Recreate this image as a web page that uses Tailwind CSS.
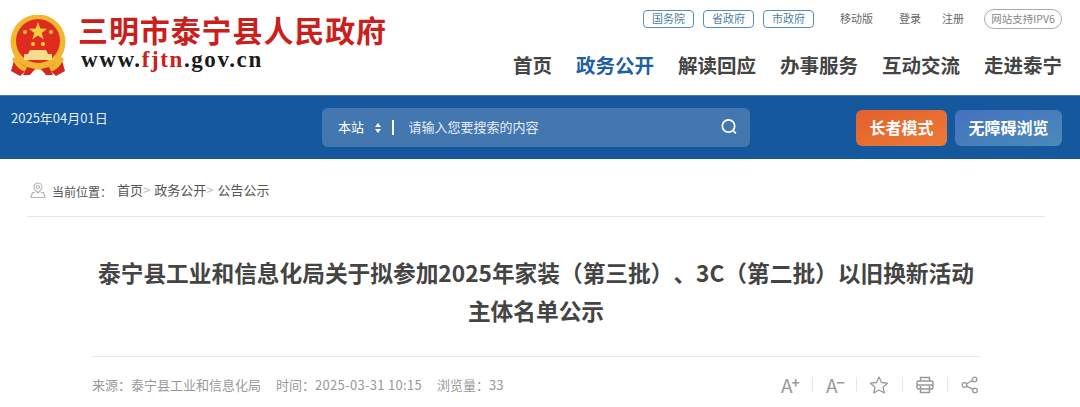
<!DOCTYPE html>
<html lang="zh-CN">
<head>
<meta charset="utf-8">
<script src="https://cdn.jsdelivr.net/npm/@tailwindcss/browser@4"></script>
<title>三明市泰宁县人民政府</title>
</head>
<body class="w-[1080px] h-[407px] overflow-hidden bg-white font-['Noto_Sans_CJK_SC','Noto_Sans',sans-serif] text-[#555] [text-spacing-trim:space-all]">
<header class="h-[95px] flex justify-between">
  <div class="flex pl-[10px] pt-[15px]">
    <svg class="w-[56px] h-[62px]" viewBox="0 0 56 62">
      <path d="M5 42 L1 56 L10 61 L20 52 L36 52 L46 61 L55 56 L51 42 Z" fill="#d3281d"/>
      <circle cx="28" cy="27" r="27.500" fill="#f2b632"/>
      <circle cx="28" cy="26" r="22" fill="#df2c1e"/>
      <path d="M28 7 l2.300 6.600 7 .1-5.600 4.200 2 6.700-5.700-4-5.700 4 2-6.700-5.600-4.200 7-.1z" fill="#f7c93e"/>
      <g fill="#f7c93e"><circle cx="15" cy="17" r="2"/><circle cx="41" cy="17" r="2"/><circle cx="23" cy="29" r="2"/><circle cx="33" cy="29" r="2"/></g>
      <path d="M20 35 h16 l2 4 h4 v6 h-28 v-6 h4z" fill="#f7dc8c"/>
      <path d="M6 41 C12 54 20 54 28 49 C36 54 44 54 50 41 L54 44 C46 60 36 58 28 54 C20 58 10 60 2 44 Z" fill="#f2b632"/>
      <path d="M17 52 L13 60 L20 60 L25 54 Z M39 52 L43 60 L36 60 L31 54 Z" fill="#d3281d"/>
    </svg>
    <div class="ml-[12px] -mt-[1px]">
      <div class="font-['Liberation_Serif','Noto_Sans_CJK_SC',serif] font-bold text-[30px] leading-[36px] tracking-[0.900px] text-[#c9201c] whitespace-nowrap">三明市泰宁县人民政府</div>
      <div class="font-['Liberation_Serif',serif] font-bold text-[23px] leading-[26px] -mt-[3px] ml-[3px] tracking-[1.600px] text-[#1a1a1a] whitespace-nowrap">www.<span class="text-[#c9201c]">fjtn</span>.gov.cn</div>
    </div>
  </div>
  <div class="flex flex-col items-end pr-[18px] pt-[9px]">
    <div class="flex items-center h-[19px] text-[11px] whitespace-nowrap">
      <a class="w-[51px] h-[18px] mr-[9px] flex items-center justify-center rounded-[4px] border border-[#5c8fb8] text-[#4f7fa8]">国务院</a>
      <a class="w-[51px] h-[18px] mr-[9px] flex items-center justify-center rounded-[4px] border border-[#5c8fb8] text-[#4f7fa8]">省政府</a>
      <a class="w-[51px] h-[18px] mr-[26px] flex items-center justify-center rounded-[4px] border border-[#5c8fb8] text-[#4f7fa8]">市政府</a>
      <span class="mr-[26px] text-[#666]">移动版</span>
      <span class="mr-[21px] text-[#666]">登录</span>
      <span class="mr-[20px] text-[#666]">注册</span>
      <span class="w-[78px] h-[20px] flex items-center justify-center rounded-full border border-[#aaa] text-[10.500px] text-[#888]">网站支持IPV6</span>
    </div>
    <nav class="mt-[23px] flex gap-[24px] text-[19.500px] leading-[28px] font-bold text-[#444] whitespace-nowrap">
      <a>首页</a><a class="text-[#1f5fa3]">政务公开</a><a>解读回应</a><a>办事服务</a><a>互动交流</a><a>走进泰宁</a>
    </nav>
  </div>
</header>
<section class="h-[64px] bg-[#15589e] flex items-center relative border-t border-[#3f7aa8]">
  <div class="absolute left-[11px] top-[13px] text-[13px] leading-[18px] text-[#e4ecf4]">2025年04月01日</div>
  <div class="ml-[322px] w-[428px] h-[39px] rounded-[6px] bg-[#4477b0] flex items-center text-white">
    <span class="ml-[16px] mb-[2px] text-[13px]">本站</span>
    <svg class="ml-[11px] w-[6px] h-[10px]" viewBox="0 0 6 10" fill="#fff"><path d="M3 0 L6 4 H0Z M3 10 L6 6 H0Z"/></svg>
    <span class="ml-[11px] w-[1.500px] h-[15px] bg-white"></span>
    <span class="ml-[15px] mb-[2px] text-[13px] text-[#e6edf5]">请输入您要搜索的内容</span>
    <svg class="ml-auto mr-[12px] mb-[2px] w-[18px] h-[18px]" viewBox="0 0 18 18" fill="none" stroke="#fff" stroke-width="1.700" stroke-linecap="round"><circle cx="8.500" cy="8" r="6.200"/><path d="M13 12.500 L15.500 15"/></svg>
  </div>
  <div class="ml-[106px] w-[91px] h-[36px] pb-[2px] rounded-[6px] bg-gradient-to-br from-[#e2602c] to-[#ed7a38] flex items-center justify-center text-[16px] font-bold text-white">长者模式</div>
  <div class="ml-[8px] w-[107px] h-[36px] pb-[2px] rounded-[6px] bg-gradient-to-br from-[#4571bf] to-[#4a8ab8] flex items-center justify-center text-[16px] font-bold text-white">无障碍浏览</div>
</section>
<main>
  <div class="ml-[27px] w-[1018px] h-[58px] border-b border-[#e6e6e6] flex items-center pl-[3px] pt-[6px] text-[13px] text-[#555] whitespace-nowrap">
    <svg class="w-[16px] h-[17px]" viewBox="0 0 16 17" fill="none" stroke="#b5b5b5" stroke-width="1.200"><path d="M8 11 C5.500 8.500 4 7 4 5 a4 4 0 0 1 8 0 C12 7 10.500 8.500 8 11Z"/><circle cx="8" cy="5" r="1.500"/><path d="M5 10.500 H2.500 L1 15.500 H15 L13.500 10.500 H11"/></svg>
    <span class="ml-[6px] mt-[2px] text-[12px]">当前位置：</span><span class="ml-[5px] -mt-[1px]">首页</span><span class="text-[#bbb] -mt-[1px]">&gt;</span><span class="ml-[4px] -mt-[1px]">政务公开</span><span class="text-[#bbb] -mt-[1px]">&gt;</span><span class="ml-[4px] -mt-[1px]">公告公示</span>
  </div>
  <article class="ml-[92px] w-[888px]">
    <h1 class="pt-[37px] text-center text-[22.700px] leading-[38px] font-bold text-[#444] whitespace-nowrap">泰宁县工业和信息化局关于拟参加2025年家装（第三批）、3C（第二批）以旧换新活动<br>主体名单公示</h1>
    <div class="mt-[26px] h-[50px] pt-[6px] border-t border-[#eaeaea] flex items-center justify-between text-[13px] text-[#999] whitespace-nowrap">
      <div class="flex gap-[15px]"><span>来源：泰宁县工业和信息化局</span><span>时间：<span class="tracking-[0.300px]">2025-03-31 10:15</span></span><span>浏览量：33</span></div>
      <div class="flex items-center mr-[1px] text-[#999]">
        <span class="w-[18px] flex text-[19px] leading-none items-start">A<span class="-ml-[1px] text-[14px] leading-none font-bold">+</span></span>
        <span class="mx-[13px] w-px h-[15px] bg-[#e8e8e8]"></span>
        <span class="w-[18px] flex text-[19px] leading-none items-start">A<span class="-ml-[1px] text-[14px] leading-none font-bold">−</span></span>
        <span class="mx-[12px] w-px h-[15px] bg-[#e8e8e8]"></span>
        <svg class="w-[20px] h-[20px]" viewBox="0 0 20 20" fill="none" stroke="#999" stroke-width="1.300" stroke-linejoin="round"><path d="M10 2 L12.500 7.500 L18.500 8.200 L14 12.200 L15.300 18 L10 15 L4.700 18 L6 12.200 L1.500 8.200 L7.500 7.500 Z"/></svg>
        <span class="mx-[13px] w-px h-[15px] bg-[#e8e8e8]"></span>
        <svg class="w-[18px] h-[18px]" viewBox="0 0 18 18" fill="none" stroke="#999" stroke-width="1.500"><path d="M4.500 5 V1.500 H13.500 V5"/><rect x="1" y="5" width="16" height="8" rx="1.500"/><path d="M1 9 H17"/><path d="M4.500 10 V16.500 H13.500 V10"/></svg>
        <span class="mx-[13px] w-px h-[15px] bg-[#e8e8e8]"></span>
        <svg class="w-[18px] h-[18px]" viewBox="0 0 18 18" fill="none" stroke="#999" stroke-width="1.300"><circle cx="13.500" cy="3.500" r="2.300"/><circle cx="3.500" cy="9" r="2.300"/><circle cx="14" cy="14.500" r="2.300"/><path d="M5.500 7.800 L11.500 4.600 M5.500 10.200 L12 13.400"/></svg>
      </div>
    </div>
  </article>
</main>
</body>
</html>
